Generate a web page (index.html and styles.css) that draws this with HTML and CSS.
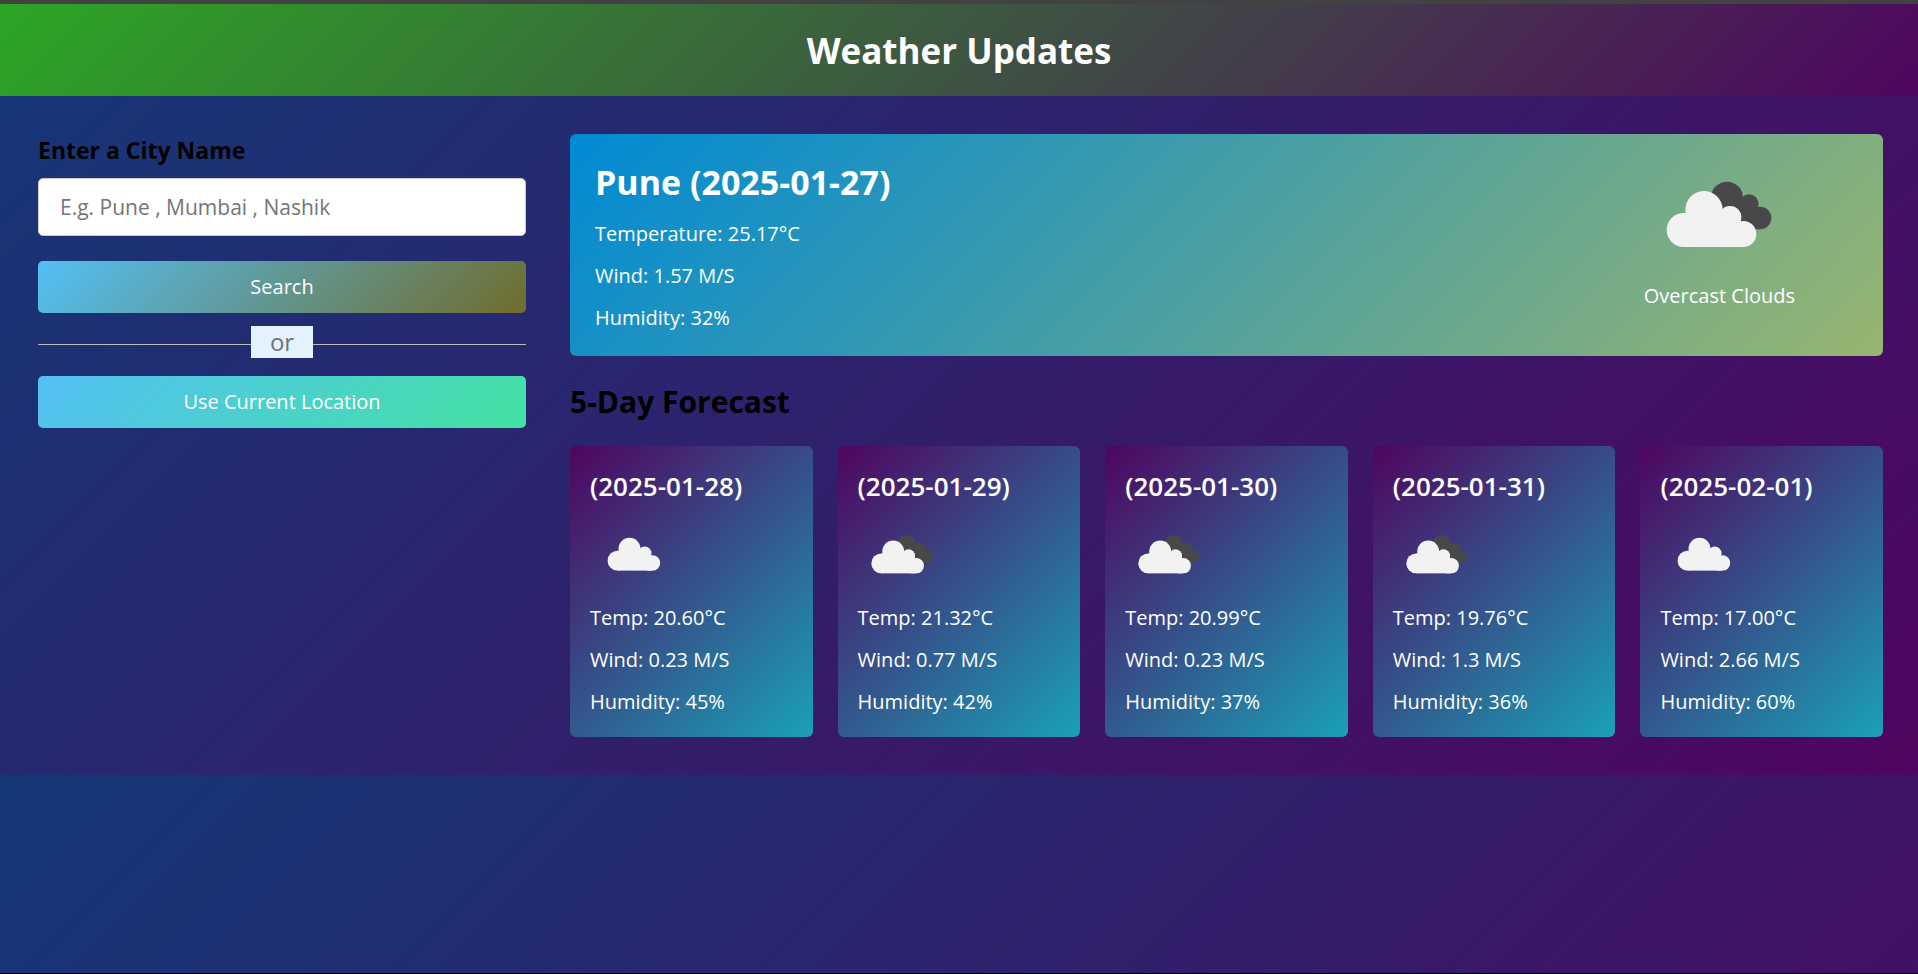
FILE: index.html
```html
<!DOCTYPE html>
<html lang="en">
<head>
<meta charset="utf-8">
<title>Weather Updates</title>
<link rel="stylesheet" href="styles.css">
</head>
<body>
<svg class="symbols" aria-hidden="true">
  <symbol id="cloud" viewBox="130 60 450 450">
    <g class="cloud-light" transform="translate(22 -14)">
      <circle cx="249" cy="333" r="51"/>
      <circle cx="310" cy="272" r="56"/>
      <circle cx="388" cy="295" r="34"/>
      <circle cx="428" cy="345" r="39"/>
      <rect x="249" y="282" width="172" height="102"/>
      <rect x="400" y="310" width="28" height="74"/>
    </g>
  </symbol>
  <symbol id="overcast" viewBox="130 60 450 450">
    <g class="cloud-dark">
      <circle cx="379" cy="236" r="48"/>
      <circle cx="445" cy="255" r="29"/>
      <circle cx="478" cy="297" r="34"/>
      <rect x="379" y="240" width="64" height="90"/>
      <rect x="440" y="266" width="38" height="65"/>
    </g>
    <g class="cloud-light">
      <circle cx="249" cy="333" r="51"/>
      <circle cx="310" cy="272" r="56"/>
      <circle cx="388" cy="295" r="34"/>
      <circle cx="428" cy="345" r="39"/>
      <rect x="249" y="282" width="172" height="102"/>
      <rect x="400" y="310" width="28" height="74"/>
    </g>
  </symbol>
</svg>
<header class="header">
  <h1>Weather Updates</h1>
</header>
<main class="container">
  <form class="search" onsubmit="return false">
    <label class="search-label" for="city">Enter a City Name</label>
    <input class="city-input" id="city" type="text" placeholder="E.g. Pune , Mumbai , Nashik">
    <button class="button search-button" type="submit">Search</button>
    <div class="separator"><span>or</span></div>
    <button class="button location-button" type="button">Use Current Location</button>
  </form>
  <div class="weather">
    <section class="current">
      <div class="details">
        <h2>Pune (2025-01-27)</h2>
        <p>Temperature: 25.17°C</p>
        <p>Wind: 1.57 M/S</p>
        <p>Humidity: 32%</p>
      </div>
      <div class="condition">
        <svg class="condition-icon"><use href="#overcast"/></svg>
        <p>Overcast Clouds</p>
      </div>
    </section>
    <section>
      <h2 class="forecast-title">5-Day Forecast</h2>
      <ul class="cards">
        <li class="card">
          <h3>(2025-01-28)</h3>
          <svg class="card-icon"><use href="#cloud"/></svg>
          <p>Temp: 20.60°C</p>
          <p>Wind: 0.23 M/S</p>
          <p>Humidity: 45%</p>
        </li>
        <li class="card">
          <h3>(2025-01-29)</h3>
          <svg class="card-icon"><use href="#overcast"/></svg>
          <p>Temp: 21.32°C</p>
          <p>Wind: 0.77 M/S</p>
          <p>Humidity: 42%</p>
        </li>
        <li class="card">
          <h3>(2025-01-30)</h3>
          <svg class="card-icon"><use href="#overcast"/></svg>
          <p>Temp: 20.99°C</p>
          <p>Wind: 0.23 M/S</p>
          <p>Humidity: 37%</p>
        </li>
        <li class="card">
          <h3>(2025-01-31)</h3>
          <svg class="card-icon"><use href="#overcast"/></svg>
          <p>Temp: 19.76°C</p>
          <p>Wind: 1.3 M/S</p>
          <p>Humidity: 36%</p>
        </li>
        <li class="card">
          <h3>(2025-02-01)</h3>
          <svg class="card-icon"><use href="#cloud"/></svg>
          <p>Temp: 17.00°C</p>
          <p>Wind: 2.66 M/S</p>
          <p>Humidity: 60%</p>
        </li>
      </ul>
    </section>
  </div>
</main>
<div class="window-edge"></div>
</body>
</html>
```
FILE: styles.css
```css
* {
  margin: 0;
  padding: 0;
  box-sizing: border-box;
}

body {
  font-family: "Open Sans", sans-serif;
  font-size: 20px;
  line-height: 27px;
  background: linear-gradient(135deg, #143878, #4f055f);
}

.symbols {
  position: absolute;
  width: 0;
  height: 0;
}

.cloud-light { fill: #f2f2f2; }
.cloud-dark { fill: #48484a; }

.header {
  border-top: 4px solid #424242;
  padding: 23px 22px 21px;
  background: linear-gradient(135deg, #2ca624, #4f055f) padding-box;
  color: #fff;
  text-align: center;
}

.header h1 {
  font-size: 35px;
  line-height: 48px;
}

.container {
  display: grid;
  grid-template-columns: 488px minmax(0, 1fr);
  gap: 44px;
  padding: 38px 35px 38px 38px;
}

.search {
  display: flex;
  flex-direction: column;
}

.search-label {
  font-size: 23px;
  font-weight: 700;
  line-height: 32px;
  margin-bottom: 12px;
}

.city-input {
  width: 100%;
  height: 58px;
  padding: 0 21px;
  border: 1px solid #ccc;
  border-radius: 5px;
  background: #fff;
  font: inherit;
  font-size: 21px;
  margin-bottom: 25px;
}

.city-input::placeholder { color: #757575; }

.button {
  width: 100%;
  height: 52px;
  padding-bottom: 2px;
  border: 0;
  border-radius: 5px;
  color: #fff;
  font: inherit;
  cursor: pointer;
}

.search-button { background: linear-gradient(135deg, #53c0f5, #706c2c); }
.location-button { background: linear-gradient(135deg, #53c0f5, #43e2a2); }

.separator {
  display: flex;
  align-items: center;
  margin: 13px 0 18px;
  color: #6c757d;
  font-size: 24px;
  line-height: 32px;
}

.separator::before,
.separator::after {
  content: "";
  flex: 1;
  height: 1px;
  margin-top: 5px;
  background: #bbb;
}

.separator span {
  padding: 0 19px;
  background: #e3f2fd;
}

.current {
  display: flex;
  justify-content: space-between;
  align-items: flex-start;
  padding: 25px 88px 25px 25px;
  border-radius: 6px;
  background: linear-gradient(135deg, #008ad4, #98b570);
  color: #fff;
  font-weight: 500;
}

.details h2 {
  font-size: 34px;
  line-height: 46px;
}

.details p,
.card p {
  margin-top: 15px;
}

.condition { text-align: center; }

.condition-icon {
  display: block;
  width: 150px;
  height: 150px;
  margin: -20px auto -7px;
}

.forecast-title {
  margin: 25px 0 24px;
  font-size: 30px;
  line-height: 41px;
}

.cards {
  display: grid;
  grid-template-columns: repeat(5, minmax(0, 1fr));
  gap: 25px;
  list-style: none;
}

.card {
  padding: 23px 20px 22px;
  border-radius: 6px;
  background: linear-gradient(135deg, #4f055f, #1aa1b6);
  color: #fff;
  font-weight: 500;
}

.card h3 {
  font-size: 26px;
  font-weight: 600;
  line-height: 35px;
}

.card-icon {
  display: block;
  width: 88px;
  height: 88px;
  margin: 6px 0 -9px;
}

.window-edge {
  position: fixed;
  inset: auto 0 0;
  height: 1px;
  background: #000;
}
```
